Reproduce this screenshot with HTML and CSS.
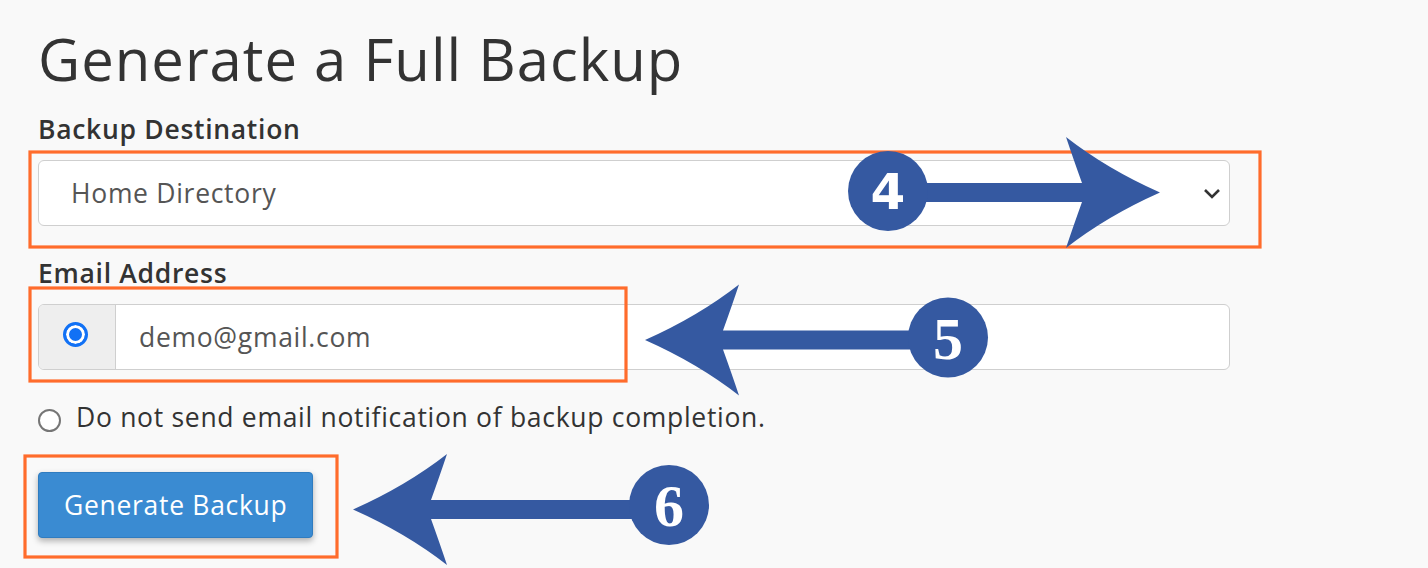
FILE: index.html
```html
<!DOCTYPE html>
<html>
<head>
<meta charset="utf-8">
<link rel="stylesheet" href="styles.css">
</head>
<body>
<div class="stage">
  <div class="page">
    <h1 class="title">Generate a Full Backup</h1>
    <div class="label">Backup Destination</div>
    <div class="select-wrap">
      <select class="select"><option>Home Directory</option></select>
      <svg class="chevron" width="18" height="11" viewBox="0 0 18 11"><path d="M2 2 L9 9 L16 2" fill="none" stroke="#333" stroke-width="2.6"/></svg>
    </div>
    <div class="label label-email">Email Address</div>
    <div class="input-group">
      <div class="addon"><span class="radio radio-on"></span></div>
      <div class="input">demo@gmail.com</div>
    </div>
    <div class="option-row">
      <span class="radio radio-off"></span>
      <span class="option-text">Do not send email notification of backup completion.</span>
    </div>
    <button class="btn">Generate Backup</button>
  </div>
  <svg class="overlay" width="1428" height="568" viewBox="0 0 1428 568">
    <g fill="none" stroke="#ff6c2c" stroke-width="3.2">
      <rect x="30" y="152" width="1230" height="95"/>
      <rect x="30" y="288" width="596" height="93"/>
      <rect x="25" y="456" width="312" height="101"/>
    </g>
    <g fill="#3559a1">
      <path d="M888,183 L1082,183 Q1073,158 1066,137 Q1107,169 1160,192.5 Q1107,216 1066,248 Q1073,227 1082,202 L888,202 Z"/>
      <circle cx="888" cy="191" r="40"/>
      <path d="M948,330.5 L723,330.5 Q732,305.5 739,284.5 Q698,316.5 645,340 Q698,363.5 739,395.5 Q732,374.5 723,349.5 L948,349.5 Z"/>
      <circle cx="948" cy="337.5" r="40"/>
      <path d="M669,500 L431,500 Q440,475 447,454 Q406,486 353,509.5 Q406,533 447,565 Q440,544 431,519 L669,519 Z"/>
      <circle cx="669" cy="505" r="40"/>
    </g>
    <text class="num num-sans" x="888" y="209">4</text>
    <text class="num num-serif" x="948" y="359">5</text>
    <text class="num num-serif" x="669" y="526">6</text>
  </svg>
</div>
</body>
</html>
```
FILE: styles.css
```css
html, body {
  margin: 0;
  padding: 0;
  background: #f9f9f9;
}
.stage {
  position: relative;
  width: 1428px;
  height: 568px;
  overflow: hidden;
  font-family: "Open Sans", "Liberation Sans", sans-serif;
  color: #333;
}
.page {
  padding: 24px 0 0 38px;
  width: 1192px;
}
.title {
  margin: 0;
  font-size: 58px;
  font-weight: 400;
  line-height: 70px;
  letter-spacing: 1px;
  color: #333;
}
.label {
  margin-top: 17px;
  font-size: 26.5px;
  font-weight: 600;
  line-height: 36px;
  letter-spacing: 0.7px;
  color: #333;
}
.label-email {
  margin-top: 29px;
}
.select-wrap {
  position: relative;
  margin-top: 13px;
  height: 66px;
}
.select {
  -webkit-appearance: none;
  appearance: none;
  box-sizing: border-box;
  width: 100%;
  height: 66px;
  margin: 0;
  padding: 0 0 0 32px;
  border: 1px solid #cfcfcf;
  border-radius: 6px;
  background: #fff;
  font-family: "Open Sans", "Liberation Sans", sans-serif;
  font-size: 26.5px;
  letter-spacing: 0.7px;
  color: #555;
  outline: none;
}
.chevron {
  position: absolute;
  right: 9px;
  top: 28px;
}
.input-group {
  display: flex;
  margin-top: 13px;
  height: 66px;
  box-sizing: border-box;
  border: 1px solid #cfcfcf;
  border-radius: 6px;
  background: #fff;
  overflow: hidden;
}
.addon {
  width: 76px;
  flex: none;
  display: flex;
  align-items: center;
  justify-content: center;
  background: #eeeeee;
  border-right: 1px solid #cfcfcf;
}
.input {
  flex: 1;
  display: flex;
  align-items: center;
  padding-left: 23px;
  font-size: 26.5px;
  letter-spacing: 0.7px;
  color: #555;
}
.radio {
  box-sizing: border-box;
  display: inline-block;
  border-radius: 50%;
  flex: none;
}
.radio-on {
  width: 25px;
  height: 25px;
  border: 3px solid #1171f5;
  background: #1171f5;
  box-shadow: inset 0 0 0 3px #fff;
  margin-top: -5px;
  margin-left: -3px;
}
.option-row {
  display: flex;
  align-items: flex-start;
  gap: 15px;
  margin-top: 29px;
  line-height: 36px;
  font-size: 26.5px;
  letter-spacing: 0.7px;
}
.radio-off {
  width: 23px;
  height: 23px;
  margin-top: 10px;
  border: 2px solid #767676;
  background: #fff;
}
.option-text {
  color: #333;
}
.btn {
  display: block;
  margin-top: 37px;
  height: 66px;
  padding: 0 25px;
  border: 1px solid #2f7cc0;
  border-radius: 4px;
  background: #3a8bd2;
  color: #fff;
  font-family: "Open Sans", "Liberation Sans", sans-serif;
  font-size: 26.5px;
  letter-spacing: 0.7px;
  box-shadow: 0 3px 6px rgba(0, 0, 0, 0.3);
}
.overlay {
  position: absolute;
  left: 0;
  top: 0;
  pointer-events: none;
}
.num {
  fill: #fff;
  font-weight: 700;
  text-anchor: middle;
}
.num-sans {
  font-family: "DejaVu Sans", "Liberation Sans", sans-serif;
  font-size: 50px;
}
.num-serif {
  font-family: "Liberation Serif", "Times New Roman", serif;
  font-size: 60px;
}
```
